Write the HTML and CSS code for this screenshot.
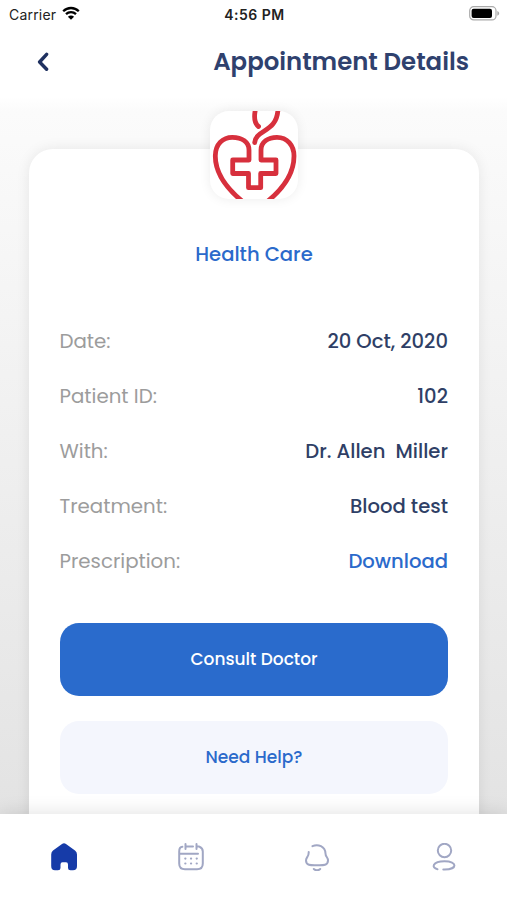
FILE: index.html
```html
<!DOCTYPE html>
<html lang="en">
<head>
    <meta charset="UTF-8">
    <meta name="viewport" content="width=device-width, initial-scale=1.0">
    <title>Appointment Details</title>
    <link rel="stylesheet" href="styles.css">
</head>
<body>

    <!-- status bar -->
    <div class="status">
        <div class="carrier">
            <span>Carrier</span>
            <svg class="wifi" viewBox="0 0 18 14">
                <path d="M1.2 5.2C5.6 .9 12.4 .9 16.8 5.2M4 8.2C6.8 5.5 11.2 5.5 14 8.2" fill="none" stroke="#000" stroke-width="2.3"/>
                <path d="M9 13.8L5.9 10.7C7.6 9.2 10.4 9.2 12.1 10.7Z"/>
            </svg>
        </div>
        <div class="time">4:56 PM</div>
        <svg class="battery" viewBox="0 0 31 15">
            <rect x=".7" y=".7" width="26.3" height="13.2" rx="4" fill="#fff" stroke="#aaa" stroke-width="1.2"/>
            <rect x="2.6" y="2.7" width="20.4" height="9.2" rx="2"/>
            <path d="M28.3 5V9.8C30.8 8.8 30.8 6 28.3 5Z" fill="#aaa"/>
        </svg>
    </div>

    <!-- header -->
    <header class="header">
        <svg class="back" viewBox="0 0 12 20">
            <path d="M9.6 2.3L2.6 10L9.6 17.3" fill="none" stroke="#1f3160" stroke-width="3.4" stroke-linecap="round" stroke-linejoin="round"/>
        </svg>
        <h1 class="title">Appointment Details</h1>
    </header>

    <!-- appointment card -->
    <main class="content">
        <section class="card">
            <svg class="logo" viewBox="0 0 88 88">
                <g fill="none" stroke="#d7303d" stroke-width="4.8" stroke-linecap="round" stroke-linejoin="round">
                    <path d="M32 90C15 76 5.300 61 5.300 45C5.300 33 13 26.300 22.300 26.300C32 26.300 39 31 39 39V49H22.700V62.500H38.500V76.700H50.700V62.500H66V49H51V39C51 31 58 26.300 67 26.300C77 26.300 84 34 84 45C84 61 75 76 58 90"/>
                    <path d="M44.700 31.500C46 18 67 22 68-2M45.500-2C44 5 44 12 48.500 15.500"/>
                </g>
            </svg>
            <h2 class="name">Health Care</h2>

            <div class="rows">
                <div class="row"><span class="label">Date:</span><span class="value">20 Oct, 2020</span></div>
                <div class="row"><span class="label">Patient ID:</span><span class="value">102</span></div>
                <div class="row"><span class="label">With:</span><span class="value">Dr. Allen  Miller</span></div>
                <div class="row"><span class="label">Treatment:</span><span class="value">Blood test</span></div>
                <div class="row"><span class="label">Prescription:</span><span class="value link">Download</span></div>
            </div>

            <button class="btn btn-main">Consult Doctor</button>
            <button class="btn btn-help">Need Help?</button>
        </section>
    </main>

    <!-- bottom menu -->
    <nav class="menu">
        <div class="item">
            <svg class="icon" viewBox="0 0 28 28">
                <path d="M12 .9Q14 -.3 16 .9L25 7.400Q27 8.900 27 11.500V23Q27 27.300 23 27.300H20.500Q18 27.300 18 25V21.500Q18 19.300 16 19.300H12.500Q10.500 19.300 10.500 21.500V25Q10.500 27.300 8 27.300H5Q1.200 27.300 1.200 23V11.500Q1.200 8.900 3 7.400Z" fill="#163ba8"/>
            </svg>
        </div>
        <div class="item">
            <svg class="icon line" viewBox="0 0 28 28">
                <path d="M5.400 3.800Q2.200 4 2.200 8.500V20.500Q2.200 26.300 8 26.300H20Q25.800 26.300 25.800 20.500V8.500Q25.800 5 22.500 3.800M2.500 10.700H21M8.500 1V6M19.500 1V6M8.500 3.600H16M19.500 3.600H22"/>
                <path class="dots" d="M8.300 15.600H8.400M14 15.600H14.100M19.700 15.600H19.800M8.300 20.500H8.400M14 20.500H14.100M19.700 20.500H19.800"/>
            </svg>
        </div>
        <div class="item">
            <svg class="icon line" viewBox="0 0 28 28">
                <path d="M9.500 3.200C15 .5 22.200 3.500 22.500 10.500C22.500 14 25 14 25 17.500C25 23 19 22.300 14 22.300C9 22.300 3 23 3 17.500C3 14 6 14 5.700 9M10.800 26Q14 28.800 17.200 26"/>
            </svg>
        </div>
        <div class="item">
            <svg class="icon line" viewBox="0 0 28 28">
                <circle cx="14.500" cy="7.500" r="6.700"/>
                <path d="M7.500 26.200C1 25 2.300 18.300 14.500 18.300C28 18.300 27.500 26.500 14.500 26.500H13.300"/>
            </svg>
        </div>
    </nav>

</body>
</html>
```
FILE: styles.css
```css
*{
    box-sizing: border-box;
}
body{
    margin: 0;
    height: 900px;
    overflow: hidden;
    display: flex;
    flex-direction: column;
    font-family: Poppins, Inter, sans-serif;
    background-color: #fff;
}

.status{
    height: 28px;
    padding: 0 7px 0 9px;
    display: grid;
    grid-template-columns: 1fr auto 1fr;
    align-items: center;
    font-family: Inter, sans-serif;
    font-size: 14px;
    color: #222;
}
.carrier{
    display: flex;
    align-items: center;
    gap: 6px;
    letter-spacing: 0.2px;
}
.wifi{
    width: 18px;
    height: 14px;
    margin-top: -2px;
}
.time{
    font-weight: 600;
    letter-spacing: 0.5px;
}
.battery{
    width: 31px;
    height: 15px;
    margin-top: -1px;
    justify-self: end;
}

.header{
    height: 69px;
    padding: 0 38px 2px 37px;
    display: flex;
    justify-content: space-between;
    align-items: center;
}
.back{
    width: 12px;
    height: 20px;
}
.title{
    margin: 0;
    font-size: 24.4px;
    font-weight: 600;
    color: #2f416e;
}

.content{
    height: 717px;
    padding: 52px 28px 0 29px;
    overflow: hidden;
    background: linear-gradient(#fff, #fbfbfb 14px, #e3e3e3);
}
.card{
    height: 720px;
    padding: 0 31px;
    display: flex;
    flex-direction: column;
    background-color: #fff;
    border-radius: 24px;
    box-shadow: 0 0 14px rgba(0, 0, 0, 0.08);
}
.logo{
    width: 88px;
    height: 88px;
    flex: none;
    align-self: center;
    margin-top: -38px;
    background-color: #fff;
    border-radius: 19px;
    box-shadow: 0 0 12px rgba(0, 0, 0, 0.08);
}
.name{
    margin: 40px 0 0;
    line-height: 30px;
    text-align: center;
    font-size: 19.6px;
    font-weight: 500;
    color: #2b6acb;
}

.rows{
    margin-top: 44px;
}
.row{
    height: 55px;
    display: flex;
    justify-content: space-between;
    align-items: center;
    font-size: 19.6px;
}
.label{
    margin-left: -0.5px;
    font-size: 19.8px;
    color: #9c9c9c;
}
.value{
    font-weight: 500;
    color: #2f3f66;
    white-space: pre;
}
.link{
    color: #2b6acb;
}

.btn{
    height: 73px;
    flex: none;
    padding-bottom: 3px;
    border: none;
    border-radius: 19px;
    font-family: inherit;
    font-size: 17px;
    font-weight: 500;
}
.btn-main{
    margin-top: 35px;
    background-color: #2a6bcc;
    color: #fff;
}
.btn-help{
    margin-top: 25px;
    background-color: #f4f6fd;
    color: #2b6acb;
}

.menu{
    height: 86px;
    padding-left: 1px;
    display: flex;
    background-color: #fff;
    box-shadow: 0 0 18px rgba(0, 0, 0, 0.13);
    position: relative;
}
.item{
    flex: 1;
    display: flex;
    justify-content: center;
    align-items: center;
}
.icon{
    width: 28px;
    height: 28px;
}
.line{
    fill: none;
    stroke: #a1a7c4;
    stroke-width: 2;
    stroke-linecap: round;
    stroke-linejoin: round;
}
.dots{
    stroke-width: 2.2;
}
```
